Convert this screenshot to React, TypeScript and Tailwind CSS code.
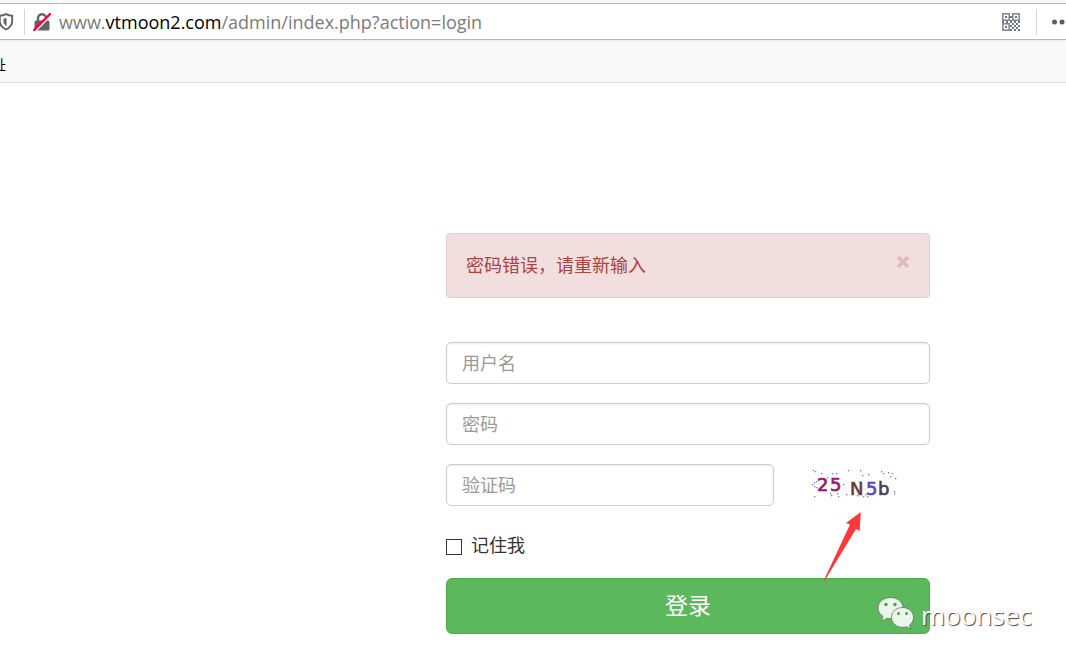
import React from 'react';

function ShieldIcon() {
  return (
    <svg viewBox="0 0 16 18" className="h-[18px] w-4 shrink-0" aria-hidden="true">
      <path d="M8 1.1c2 1 4.2 1.5 6.2 1.6v5.6c0 3.8-2.6 6.500-6.200 8.200-3.600-1.700-6.200-4.400-6.200-8.200V2.700C3.800 2.600 6 2.100 8 1.100z" fill="none" stroke="#636365" strokeWidth="1.9" strokeLinejoin="round" />
      <path d="M8.500 4.700c-1 .6-2 .8-3 .9v2.700c0 2 1.100 3.600 3 4.700z" fill="#636365" />
    </svg>
  );
}

function InsecureLockIcon() {
  return (
    <svg viewBox="0 0 18 20" className="h-5 w-[18px] shrink-0" aria-hidden="true">
      <path d="M5 9V6.300a4 4 0 0 1 8 0V9" fill="none" stroke="#636365" strokeWidth="2.400" />
      <rect x="1.500" y="8.500" width="15" height="10" rx="1.500" fill="#636365" />
      <path d="M1.800 19.600 18 3.200" stroke="#fff" strokeWidth="2" />
      <path d="M1.200 18 17 2" stroke="#ff0039" strokeWidth="2.400" strokeLinecap="round" />
    </svg>
  );
}

function QrIcon() {
  return (
    <svg viewBox="0 0 18 18" className="size-[18px]" aria-hidden="true">
      <g fill="none" stroke="#838b96" strokeWidth="1.600">
        <rect x=".8" y=".8" width="6.400" height="6.400" />
        <rect x="10.800" y=".8" width="6.400" height="6.400" />
        <rect x=".8" y="10.800" width="6.400" height="6.400" />
      </g>
      <g fill="#6f7782">
        <rect x="3" y="3" width="2" height="2" />
        <rect x="13" y="3" width="2" height="2" />
        <rect x="3" y="13" width="2" height="2" />
        <path d="M8 3h2v2H8zM0 8h2v2H0zM4 8h2v2H4zM8 7h2v3H8zM12 8h2v2h-2zM16 8h2v2h-2zM10 10h2v2h-2zM14 10h2v2h-2zM8 12h2v2H8zM12 12h2v2h-2zM16 12h2v2h-2zM10 14h2v2h-2zM14 14h2v2h-2zM8 16h2v2H8zM12 16h2v2h-2zM16 16h2v2h-2z" />
      </g>
    </svg>
  );
}

const NOISE = [
  [5, 2], [7, 3], [13, 5], [24, 5], [28, 5], [40, 2], [52, 2], [54, 7], [60, 6], [73, 3], [75, 5], [80, 4],
  [84, 5], [82, 8], [87, 10], [6, 14], [8, 13], [4, 16], [6, 18], [8, 19], [6, 28], [22, 25], [23, 27],
  [29, 25], [30, 28], [38, 26], [49, 27], [55, 28], [59, 28], [57, 26], [86, 23], [86, 25], [19, 9], [35, 16], [51, 13],
];

function Captcha() {
  return (
    <svg viewBox="0 0 92 36" className="h-9 w-[92px]" role="img" aria-label="25N5b">
      {NOISE.map(([x, y]) => <rect key={`${x}-${y}`} x={x} y={y + 1} width="1.300" height="1.300" fill="#7a70e0" />)}
      <g fontFamily="DejaVu Sans, sans-serif" fontSize="18" strokeWidth=".7">
        <text x="9" y="24" fill="#9b146b" stroke="#9b146b">2</text>
        <text x="22" y="24" fill="#9b146b" stroke="#9b146b">5</text>
        <text x="42" y="28" fill="#673c3f" stroke="#673c3f">N</text>
        <text x="58" y="28" fill="#5b45b8" stroke="#5b45b8">5</text>
        <text x="70" y="28" fill="#494251" stroke="#494251">b</text>
      </g>
    </svg>
  );
}

function WeChatIcon() {
  return (
    <svg viewBox="0 0 38 34" className="h-[34px] w-[38px] shrink-0" aria-hidden="true">
      <g stroke="#4b6b4b" strokeWidth=".7">
        <path d="M13.500 1.500C6.400 1.500 1 6.100 1 12c0 3.500 1.900 6.500 5 8.500l-1.400 5 5.300-3.200c1.200.3 2.300.4 3.600.4 7 0 12.500-4.600 12.500-10.600S20.600 1.500 13.500 1.500z" fill="#eaf6ea" />
        <path d="M25.500 11.500c-6.200 0-11 4.300-11 9.900s4.800 9.900 11 9.900c1.400 0 2.700-.2 3.900-.6l4.300 2.300-1.200-4c2.500-1.800 4-4.500 4-7.600 0-5.600-4.800-9.900-11-9.900z" fill="#eaf6ea" />
      </g>
      <g fill="#4b9d4b"><circle cx="9" cy="8.500" r="1.700" /><circle cx="18" cy="8.500" r="1.700" /><circle cx="21.500" cy="17.500" r="1.500" /><circle cx="29.500" cy="17.500" r="1.500" /></g>
    </svg>
  );
}

const fieldClass =
  "h-[42px] rounded-[5px] border border-[#ccc] bg-white px-[15px] text-[18px] text-[#555] shadow-[inset_0_1px_2px_rgba(0,0,0,0.08)] outline-none placeholder:text-[#999] focus:border-[#66afe9]";

export default function App() {
  return (
    <div className="min-h-screen overflow-x-hidden bg-white font-['Noto_Sans','Noto_Sans_CJK_SC',sans-serif] text-[#333]">
      <header className="border-b border-[#dedee0] bg-[#f9f9fa] pt-[3px]">
        <div className="flex h-[37px] items-center border-y border-[#b8b8b9] bg-white shadow-[0_1px_3px_rgba(0,0,0,0.06)]">
          <span className="-ml-0.5 flex"><ShieldIcon /></span>
          <span className="ml-2.5 h-[26px] w-px bg-[#d7d7db]" />
          <span className="ml-2 flex"><InsecureLockIcon /></span>
          <div className="ml-2 flex-1 font-['Open_Sans','Noto_Sans',sans-serif] text-[18px] leading-6 whitespace-nowrap text-[#7b7b7b]">
            www.<span className="text-black">vtmoon2.com</span>/admin/index.php?action=login
          </div>
          <button type="button" aria-label="QR code" className="mr-4"><QrIcon /></button>
          <span className="h-[26px] w-px bg-[#d7d7db]" />
          <button type="button" aria-label="More actions" className="-mr-2 ml-[15px]">
            <svg viewBox="0 0 22 6" className="h-1.5 w-[22px]" fill="#5e5e60" aria-hidden="true">
              <circle cx="2.500" cy="3" r="2.500" /><circle cx="10" cy="3" r="2.500" /><circle cx="17.500" cy="3" r="2.500" />
            </svg>
          </button>
        </div>
        <nav className="flex h-[42px] items-center pt-1.5 text-[14px] text-black">
          <a href="#bookmarks" className="-ml-2">址</a>
        </nav>
      </header>

      <main className="mr-[136px] ml-auto w-[484px] max-w-full pt-[150px]">
        <div role="alert" className="mb-11 flex h-[65px] items-center justify-between rounded border border-[#ebccd1] bg-[#f2dede] pr-[19px] pl-[19px] text-[18px] text-[#a94442]">
          <span>密码错误，请重新输入</span>
          <button type="button" aria-label="关闭" className="mb-2">
            <svg viewBox="0 0 14 14" className="size-3.5" aria-hidden="true"><path d="m2 2 10 10m0-10L2 12" stroke="#e2b9b9" strokeWidth="3.500" /></svg>
          </button>
        </div>

        <form className="flex flex-col" onSubmit={(e) => e.preventDefault()}>
          <div className="flex flex-col gap-[19px]">
            <input aria-label="用户名" placeholder="用户名" className={fieldClass} />
            <input type="password" aria-label="密码" placeholder="密码" className={fieldClass} />
            <div className="flex items-center">
              <input aria-label="验证码" placeholder="验证码" className={`${fieldClass} w-[328px]`} />
              <div className="relative ml-[34px]">
                <Captcha />
                <svg viewBox="0 0 44 72" className="absolute top-[45px] left-3 z-10 h-[72px] w-11" aria-hidden="true">
                  <path d="M3.500 69 30 12.500 26 11 40.700 0l-1 19-3.700-2L4.300 69.300z" fill="#ff3838" />
                </svg>
              </div>
            </div>
          </div>
          <label className="mt-[26px] flex h-[27px] items-center gap-[9px] self-start text-[18px]">
            <input type="checkbox" className="mt-0.5 size-4 appearance-none border border-[#333] bg-white checked:bg-[#333]" />
            记住我
          </label>
          <div className="relative mt-[19px]">
            <button type="submit" className="h-14 w-full rounded-md border border-[#4cae4c] bg-[#5cb85c] pb-0.5 text-[23px] text-white">登录</button>
            <div className="pointer-events-none absolute top-[17px] left-[431px] flex items-center gap-1.5">
              <WeChatIcon />
              <span className="pt-1 font-['Open_Sans','Noto_Sans',sans-serif] text-[26px] leading-8 text-white [text-shadow:1px_1px_1px_#444]">moonsec</span>
            </div>
          </div>
        </form>
      </main>
    </div>
  );
}
